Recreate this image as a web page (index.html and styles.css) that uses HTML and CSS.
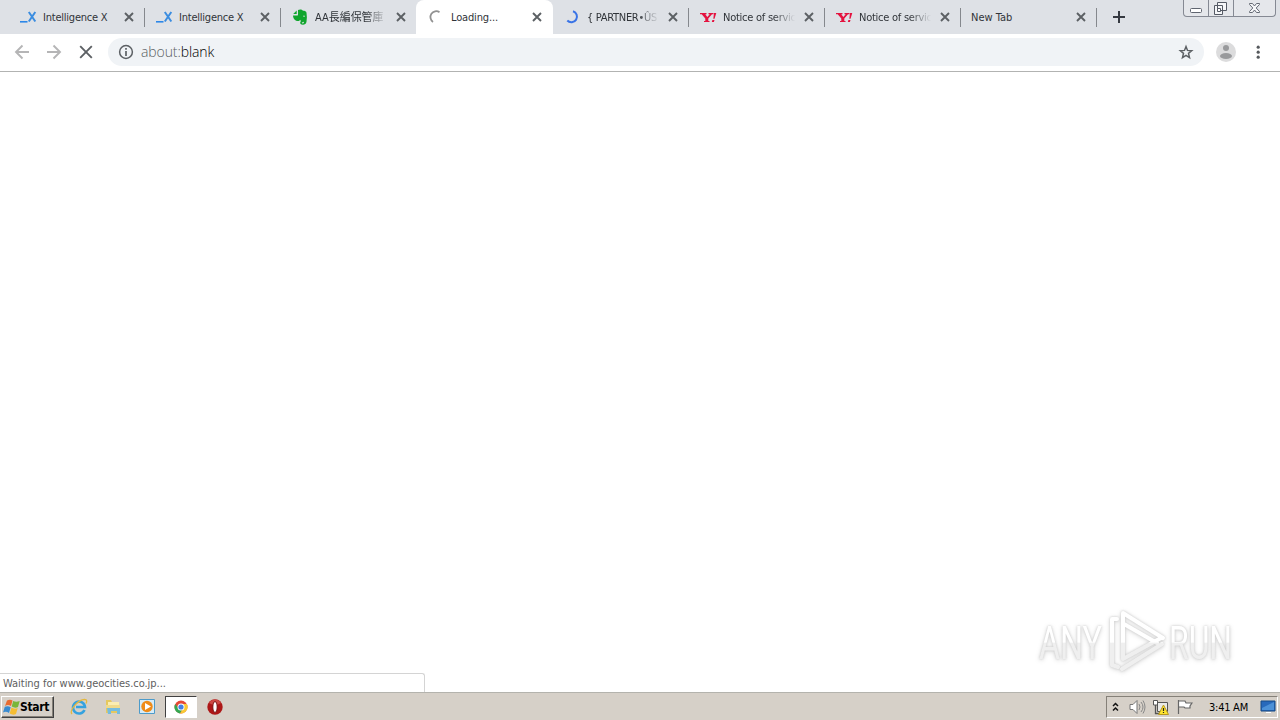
FILE: index.html
```html
<!DOCTYPE html>
<html lang="en">
<head>
    <meta charset="UTF-8">
    <meta name="viewport" content="width=device-width, initial-scale=1.0">
    <title>about:blank</title>
    <link rel="stylesheet" href="styles.css">
</head>
<body>
    <svg class="defs" width="0" height="0">
        <symbol id="close" viewBox="0 0 10 10"><path d="M1 1l8 8M9 1l-8 8" stroke="#5c6064" stroke-width="1.9"/></symbol>
        <symbol id="ix" viewBox="0 0 18 16"><path d="M0 12.800h7.500" stroke="#2c87e8" stroke-width="1.600"/><path d="M8.800 3l6.500 9.500M15.300 3l-6.500 9.500" stroke="#3b8de0" stroke-width="2" fill="none"/></symbol>
        <symbol id="yahoo" viewBox="0 0 18 16"><path d="M0 4h6.500v1.200H5.300l2 2.800 2.400-2.800H8.500V4h5v1.200H12L8.300 9.400V12h1.200v1H4v-1h1.300V9.400L1.700 5.200H0zM14 4h2.300l-1.800 5.800h-1.200zM12.400 11h2.100l-.6 2h-2.100z" fill="#e4123f"/></symbol>
    </svg>

    <div class="tabs">
        <div class="tab">
            <svg class="favicon" width="18" height="16"><use href="#ix"/></svg>
            <span class="title wide">Intelligence X</span>
            <svg class="close" width="10" height="10"><use href="#close"/></svg>
        </div>
        <div class="tab">
            <svg class="favicon" width="18" height="16"><use href="#ix"/></svg>
            <span class="title wide">Intelligence X</span>
            <svg class="close" width="10" height="10"><use href="#close"/></svg>
        </div>
        <div class="tab no_line">
            <svg class="favicon" width="18" height="16" viewBox="0 0 18 16"><path d="M4.700 1.500L1.200 5h3.500zM6 1c2-1 4-.5 5 .8 1.800 0 3.200.5 3.500 2 .5 3 .5 6 0 9-.4 2.300-1.800 3-3.500 3-2.300 0-3.200-1.300-2.700-2.800.5-1.200 2-1.500 3-1v1.300c-1.200-.2-1.600.3-1.400.8.3.5 1.800.4 2-.4.300-1-.5-1.500-2-1.500-1 0-1.500-.8-1.800-1.500-.5 1.500-2 1.500-4 1C2 11 1 8.500 1 6.500h4c1 0 1-.5 1-1.500z" fill="#10a52d"/><path d="M11 7.500c.3-1.300 1.800-1.200 2 .2z" fill="#dee1e6"/></svg>
            <span class="title cjk">AA長編保管庫</span>
            <svg class="close" width="10" height="10"><use href="#close"/></svg>
        </div>
        <div class="tab active">
            <svg class="favicon" width="18" height="16" viewBox="0 0 18 16"><path d="M11.500 3.200A5.500 5.500 0 1 0 5 12.900" fill="none" stroke="#929292" stroke-width="1.800"/></svg>
            <span class="title loading">Loading...</span>
            <svg class="close" width="10" height="10"><use href="#close"/></svg>
        </div>
        <div class="tab">
            <svg class="favicon" width="18" height="16" viewBox="0 0 18 16"><path d="M9 2.300A5.600 5.600 0 1 1 3.300 11.500" fill="none" stroke="#3973e6" stroke-width="2"/></svg>
            <span class="title partner">{ PARTNER•ÛS</span>
            <svg class="close" width="10" height="10"><use href="#close"/></svg>
        </div>
        <div class="tab">
            <svg class="favicon" width="18" height="16"><use href="#yahoo"/></svg>
            <span class="title notice">Notice of servic</span>
            <svg class="close" width="10" height="10"><use href="#close"/></svg>
        </div>
        <div class="tab">
            <svg class="favicon" width="18" height="16"><use href="#yahoo"/></svg>
            <span class="title notice">Notice of servic</span>
            <svg class="close" width="10" height="10"><use href="#close"/></svg>
        </div>
        <div class="tab">
            <span class="title new_tab">New Tab</span>
            <svg class="close" width="10" height="10"><use href="#close"/></svg>
        </div>
        <svg class="plus" width="12" height="12" viewBox="0 0 12 12"><path d="M6 0v12M0 6h12" stroke="#353941" stroke-width="2"/></svg>
        <div class="window_buttons">
            <span class="min"><svg width="24" height="16" viewBox="0 0 24 16"><rect x="6.500" y="8.500" width="11" height="4" rx="1" fill="#fff" stroke="#606570"/></svg></span>
            <span class="max"><svg width="24" height="16" viewBox="0 0 24 16"><path d="M8.500 2.500h9v8h-9zM5.500 5.500h8v9h-8z" fill="#f5f6f8" stroke="#555a65" stroke-linejoin="round"/><path d="M8.500 8.500h3v3h-3z" fill="#fff" stroke="#555a65"/></svg></span>
            <span class="exit"><svg width="41" height="16" viewBox="0 0 41 16"><path d="M15.500 3.500h3l2 2.500 2-2.500h3v1L22.200 8l3.300 3.500v1h-3l-2-2.500-2 2.500h-3v-1L18.800 8l-3.300-3.500z" fill="#f5f6f8" stroke="#656a75"/></svg></span>
        </div>
    </div>

    <div class="toolbar">
        <svg class="nav" width="16" height="16" viewBox="0 0 16 16"><path d="M15 8H2M8.500 1.500L2 8l6.500 6.500" fill="none" stroke="#b5b5b6" stroke-width="1.900"/></svg>
        <svg class="nav" width="16" height="16" viewBox="0 0 16 16"><path d="M1 8h13M7.500 1.500L14 8l-6.500 6.500" fill="none" stroke="#b5b5b6" stroke-width="1.900"/></svg>
        <svg class="nav" width="16" height="16" viewBox="0 0 16 16"><path d="M2.200 2.200l11.600 11.600M13.800 2.200L2.200 13.800" stroke="#5c6064" stroke-width="1.900"/></svg>
        <div class="address">
            <svg width="16" height="16" viewBox="0 0 16 16"><circle cx="8" cy="8" r="6.400" fill="none" stroke="#5c6064" stroke-width="1.500"/><path d="M8 7v5M8 4v1.800" stroke="#5c6064" stroke-width="1.700"/></svg>
            <span class="url">about:<b>blank</b></span>
            <svg class="star" width="16" height="16" viewBox="0 0 16 16"><path d="M8 2.500l1.500 3.900 4.200.3-3.200 2.700 1 4.200L8 11.300l-3.500 2.300 1-4.200-3.200-2.700 4.200-.3z" fill="none" stroke="#5c6064" stroke-width="1.500"/></svg>
        </div>
        <svg class="avatar" width="20" height="20" viewBox="0 0 20 20"><circle cx="10" cy="10" r="10" fill="#dcdcdd"/><circle cx="10" cy="6" r="3" fill="#999a9c"/><ellipse cx="10" cy="14" rx="6" ry="3" fill="#999a9c"/></svg>
        <svg class="dots" width="4" height="14" viewBox="0 0 4 14"><g fill="#56595d"><circle cx="2.200" cy="2.200" r="1.600"/><circle cx="2.200" cy="7.200" r="1.600"/><circle cx="2.200" cy="12.200" r="1.600"/></g></svg>
    </div>

    <div class="page">
        <svg class="watermark" width="220" height="76" viewBox="0 0 220 76">
            <defs>
                <linearGradient id="shade" gradientUnits="userSpaceOnUse" x1="0" y1="0" x2="0" y2="76">
                    <stop offset="49%" stop-color="#fff"/>
                    <stop offset="50%" stop-color="#efefef"/>
                </linearGradient>
            </defs>
            <g class="mark">
                <text x="11" y="54" textLength="63" lengthAdjust="spacingAndGlyphs">ANY</text>
                <text x="141" y="54" textLength="63" lengthAdjust="spacingAndGlyphs">RUN</text>
                <path d="M89 14h-5v46l6 2M95 54V8l40 25M96 19l33 19M95 54l38-21M94 64l40-25"/>
            </g>
        </svg>
        <div class="status">Waiting for www.geocities.co.jp...</div>
    </div>

    <div class="taskbar">
        <div class="start">
            <svg width="18" height="18" viewBox="0 0 18 18"><path d="M4 2.500q3-1.500 5.500 0L8 8Q5 6 2 8z" fill="#e96c31"/><path d="M10.200 3q3 1.600 6.500 0L15 9q-3 1.500-6.300-.5z" fill="#79b63a"/><path d="M1.800 8.800q3-1.500 5.900.5L6 15q-3-2-6-.5z" fill="#398bd0"/><path d="M8.500 9.500q3 2 6.200.5L13 16q-3 1.500-6.300-.5z" fill="#f5bd31"/></svg>
            <span>Start</span>
        </div>
        <div class="launch">
            <svg width="18" height="18" viewBox="0 0 18 18"><path d="M14.500 12A6 6 0 1 1 15 9H6" fill="none" stroke="#35a2df" stroke-width="2.600"/><path d="M2 16C-1 13 8 1 15 1.500c2 0 2 2 1 4" fill="none" stroke="#e4b83e" stroke-width="1.300"/></svg>
        </div>
        <div class="launch">
            <svg width="18" height="18" viewBox="0 0 18 18"><path d="M2 2h5l1 2h7v11H2z" fill="#e5c85f"/><path d="M4 4h11v6H4z" fill="#faedb1"/><path d="M2 7h14v3H2z" fill="#efda8b"/><path d="M3 10h13v6h-3v-3H7v3H4z" fill="#75bcdf"/></svg>
        </div>
        <div class="launch">
            <svg width="18" height="18" viewBox="0 0 18 18"><path d="M1.500 1.500h15v14h-15z" fill="#d7ecf8" stroke="#4d9bca"/><circle cx="9" cy="8.500" r="5.700" fill="#ef8b18"/><path d="M7 5l6 3.500L7 12z" fill="#fff"/></svg>
        </div>
        <div class="launch running">
            <svg width="16" height="16" viewBox="0 0 16 16"><circle cx="8" cy="8" r="6.500" fill="#e54936"/><path d="M2.200 5A6.500 6.500 0 0 0 7 14.500L10 9l-4 1z" fill="#32a851"/><path d="M13.800 5A6.500 6.500 0 0 1 7 14.500L11 8 9 5z" fill="#f8c934"/><circle cx="8" cy="8" r="3.500" fill="#fff"/><circle cx="8" cy="8" r="2.600" fill="#437fe5"/></svg>
        </div>
        <div class="launch">
            <svg width="18" height="18" viewBox="0 0 18 18"><circle cx="9" cy="9" r="7.700" fill="#ad1717"/><path d="M3 5a7 7 0 0 1 12 0l-4 2H7z" fill="#cd4944"/><ellipse cx="9" cy="9" rx="2.200" ry="5.500" fill="#fff" stroke="#781010"/></svg>
        </div>
        <div class="tray">
            <svg class="up" width="7" height="10" viewBox="0 0 7 10"><path d="M1 4l2.500-2.500L6 4M1 8.500L3.500 6 6 8.500" fill="none" stroke="#111" stroke-width="1.500"/></svg>
            <svg class="sound" width="17" height="16" viewBox="0 0 17 16"><path d="M1 5.500h3l4-4v13l-4-4H1z" fill="#fff" stroke="#777"/><path d="M10 5q2 3 0 6M12 3q4 5 0 10M14 1.500q4 6.500 0 13" fill="none" stroke="#888"/></svg>
            <svg class="net" width="17" height="16" viewBox="0 0 17 16"><path d="M5.500 3.500h10v9h-10z" fill="#e9e9e7" stroke="#555"/><path d="M1.500 1.500h4V6h-4z" fill="#fff" stroke="#555"/><path d="M3.500 6v8.500h6" fill="none" stroke="#555" stroke-width="1.300"/><path d="M11.500 6l5 9.500H6.500z" fill="#ffe52e" stroke="#b79820"/><path d="M11.500 9v3m0 1v1" stroke="#222" stroke-width="1.200"/></svg>
            <svg class="flag" width="17" height="16" viewBox="0 0 17 16"><path d="M2.500 1v14M3 2h6l1 2h6l-2 3v2H9L8 8H3" fill="#fff" stroke="#666" stroke-width="1.200"/></svg>
            <span class="time">3:41 AM</span>
            <svg class="desktop" width="16" height="14" viewBox="0 0 16 14"><path d="M1 1h14v10H1z" fill="#2869bb" stroke="#174a85"/><path d="M2 8L14 2v8H2z" fill="#4d91d7"/><path d="M6 12h5v1H6z" fill="#fff"/></svg>
        </div>
    </div>
</body>
</html>
```
FILE: styles.css
```css
*{
    box-sizing: border-box;
}
body{
    display: flex;
    flex-direction: column;
    height: 720px;
    margin: 0;
    overflow: hidden;
    background: #fff;
    font-family: "DejaVu Sans Condensed", "Noto Sans CJK TC", sans-serif;
    font-size: 11px;
}
svg{
    display: block;
    flex: none;
}
.defs{
    position: absolute;
}
.tabs{
    display: flex;
    height: 34px;
    padding-left: 8px;
    background: #dee1e6;
}
.tab{
    display: flex;
    align-items: center;
    position: relative;
    width: 136px;
    padding-left: 12px;
    color: #303439;
}
.tab::after{
    content: "";
    position: absolute;
    right: -1px;
    top: 8px;
    width: 1px;
    height: 19px;
    background: #85888d;
}
.tab.no_line::after,
.tab.active::after{
    display: none;
}
.title{
    width: 72px;
    margin-left: 5px;
    padding-top: 1px;
    white-space: nowrap;
    line-height: 16px;
    letter-spacing: -.15px;
}
.title.wide{
    letter-spacing: -.22px;
}
.title.cjk{
    letter-spacing: -.05px;
}
.title.notice{
    letter-spacing: -.25px;
}
.title.partner{
    letter-spacing: -.3px;
}
.title.notice,
.title.partner,
.title.cjk{
    -webkit-mask-image: linear-gradient(to right, #000 70%, transparent);
    mask-image: linear-gradient(to right, #000 70%, transparent);
}
.title.new_tab{
    width: 96px;
    margin-left: -1px;
    letter-spacing: 0;
}
.close{
    margin-left: 9px;
}
.tab.active{
    width: 137px;
    margin-right: -1px;
    background: #fff;
    border-radius: 8px 8px 0 0;
}
.plus{
    margin: 11px 0 0 17px;
}
.window_buttons{
    display: flex;
    height: 17px;
    margin-left: auto;
    margin-right: 4px;
    border: 1px solid #858993;
    border-top: 0;
    border-radius: 0 0 4px 4px;
    background: #e5e7eb;
}
.window_buttons span + span{
    border-left: 1px solid #858993;
}
.toolbar{
    display: flex;
    align-items: center;
    height: 38px;
    padding: 0 20px 2px 14px;
    border-bottom: 1px solid #b2b3b2;
}
.nav{
    margin-right: 16px;
}
.address{
    display: flex;
    align-items: center;
    width: 1096px;
    height: 28px;
    margin-left: -2px;
    padding: 0 10px;
    border-radius: 14px;
    background: #f0f3f6;
}
.url{
    margin-left: 7px;
    font-family: "Open Sans", sans-serif;
    font-size: 14px;
    font-weight: 300;
    letter-spacing: -.1px;
    color: #5a5e62;
}
.url b{
    font-weight: 300;
    color: #000;
}
.star{
    margin-left: auto;
}
.avatar{
    margin-left: 12px;
}
.dots{
    margin-left: 20px;
}
.page{
    position: relative;
    display: flex;
    flex: 1;
    align-items: flex-end;
}
.status{
    width: 425px;
    height: 19px;
    padding-left: 3px;
    border: 1px solid #d4d4d4;
    border-left: 0;
    border-bottom: 0;
    border-radius: 0 3px 0 0;
    line-height: 19px;
    letter-spacing: -.03px;
    color: #606060;
}
.watermark{
    position: absolute;
    left: 1028px;
    top: 533px;
}
.mark{
    fill: none;
    stroke: url(#shade);
    stroke-width: 4;
    stroke-linejoin: round;
    stroke-linecap: round;
    filter: drop-shadow(0 0 1px #ccc) drop-shadow(0 1px 2px #ddd);
}
.mark text{
    font-family: Roboto, sans-serif;
    font-size: 47px;
    font-weight: 400;
    fill: url(#shade);
    stroke: none;
}
.taskbar{
    display: flex;
    align-items: center;
    height: 28px;
    padding: 1px 2px 0 1px;
    border-top: 1px solid #b4b3ad;
    background: #d6d0c8;
}
.start{
    display: flex;
    align-items: center;
    width: 53px;
    height: 22px;
    margin-right: 7px;
    padding-left: 1px;
    border: 1px solid;
    border-color: #fff #404040 #404040 #fff;
    box-shadow: inset -1px -1px #858078;
    font-size: 12px;
    font-weight: bold;
    letter-spacing: -.35px;
}
.start span{
    margin-left: -1px;
}
.launch{
    display: flex;
    align-items: center;
    justify-content: center;
    width: 32px;
    height: 22px;
    margin-left: 2px;
}
.running{
    border: 1px solid;
    border-color: #404040 #fff #fff #404040;
    background: #fff;
}
.tray{
    display: flex;
    align-items: center;
    width: 172px;
    height: 22px;
    margin-left: auto;
    padding-left: 5px;
    border: 1px solid;
    border-color: #858078 #fff #fff #858078;
}
.sound{
    margin-left: 10px;
}
.net,
.flag{
    margin-left: 6px;
}
.flag{
    margin-left: 7px;
}
.time{
    width: 41px;
    margin-left: 16px;
    letter-spacing: -.25px;
    white-space: nowrap;
}
.desktop{
    margin-left: 10px;
}
```
